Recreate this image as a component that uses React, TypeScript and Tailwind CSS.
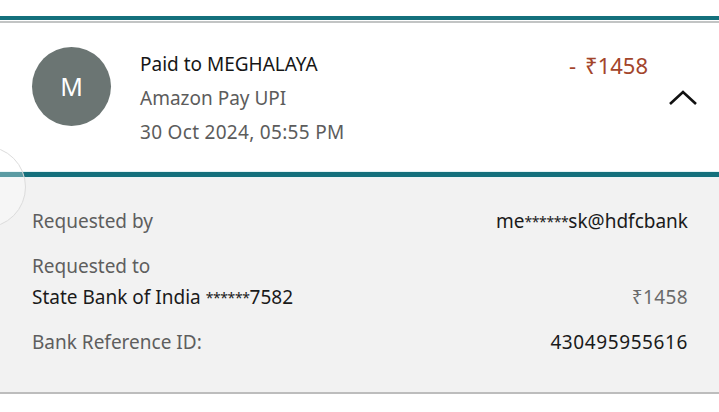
import React from 'react';

const font = { fontFamily: '"Noto Sans", "Open Sans", sans-serif' };

function Chevron() {
    return (
        <svg width="30" height="18" viewBox="0 0 30 18" className="block">
            <path d="M2 15 L15 3 L28 15" fill="none" stroke="#111" strokeWidth="2.6" />
        </svg>
    );
}

// masked chars are drawn small and raised, like in the app
const Masked: React.FC<{ head: string; tail: string }> = ({ head, tail }) => (
    <span>
        {head}
        <span className="relative top-[-1px] text-[14px] leading-none tracking-[-0.4px]">******</span>
        {tail}
    </span>
);

const Row: React.FC<{ label: React.ReactNode; value: React.ReactNode; valueClass?: string }> = ({ label, value, valueClass }) => (
    <div className="flex items-center justify-between h-[28px]">
        <div className="text-[#5e5e5e]">{label}</div>
        <div className={valueClass ?? 'text-[#1a1a1a]'}>{value}</div>
    </div>
);

export default function App() {
    return (
        <div className="relative w-[719px] h-[412px] overflow-hidden bg-white text-[19px]" style={font}>
            <div className="h-[16px]" />
            <div className="h-[4px] bg-[#14707c]" />
            <div className="h-[1px] bg-white" />
            <div className="h-[2px] bg-[#c2c4c4]" />
            <div className="h-[148px] flex items-start pt-[24px] pl-[32px] pr-[22px]">
                <div className="w-[79px] h-[79px] rounded-full bg-[#6b7573] flex items-center justify-center text-white text-[25px]">
                    M
                </div>
                <div className="ml-[29px] flex flex-col gap-[7px] pt-[4px] leading-[27px]">
                    <div className="text-[#161616]">Paid to MEGHALAYA</div>
                    <div className="text-[#5c5c5c]">Amazon Pay UPI</div>
                    <div className="text-[#5c5c5c] tracking-[0.3px]">30 Oct 2024, 05:55 PM</div>
                </div>
                <div className="ml-auto flex flex-col items-end">
                    <div className="text-[#a3452b] text-[22px] leading-[28px] mr-[49px] mt-[4px] flex">
                        <span>-</span>
                        <span className="ml-[9px]">₹1458</span>
                    </div>
                    <div className="mt-[10px] mr-[-1px]">
                        <Chevron />
                    </div>
                </div>
            </div>
            <div className="h-[1px] bg-[#e3f4f5]" />
            <div className="h-[5px] bg-[#14707c]" />
            <div className="h-[215px] bg-[#f2f2f2] border-t border-[#eaf5f6] px-[32px] pr-[31px] pt-[29px] flex flex-col leading-[28px]">
                <Row label="Requested by" value={<Masked head="me" tail="sk@hdfcbank" />} />
                <div className="mt-[17px] h-[28px] text-[#5e5e5e]">Requested to</div>
                <div className="mt-[3px] flex items-center justify-between h-[28px]">
                    <div className="text-[#1a1a1a]">
                        <Masked head="State Bank of India " tail="7582" />
                    </div>
                    <div className="text-[#6a6a6a] tracking-[0.4px]">₹1458</div>
                </div>
                <div className="mt-[17px]">
                    <Row label="Bank Reference ID:" value={<span className="tracking-[0.6px]">430495955616</span>} />
                </div>
            </div>
            <div className="h-[2px] bg-[#bdbdbd]" />
            <div className="absolute left-[-56px] top-[146px] w-[82px] h-[82px] rounded-full border border-[#dcdcdc] bg-white/30" />
        </div>
    );
}
